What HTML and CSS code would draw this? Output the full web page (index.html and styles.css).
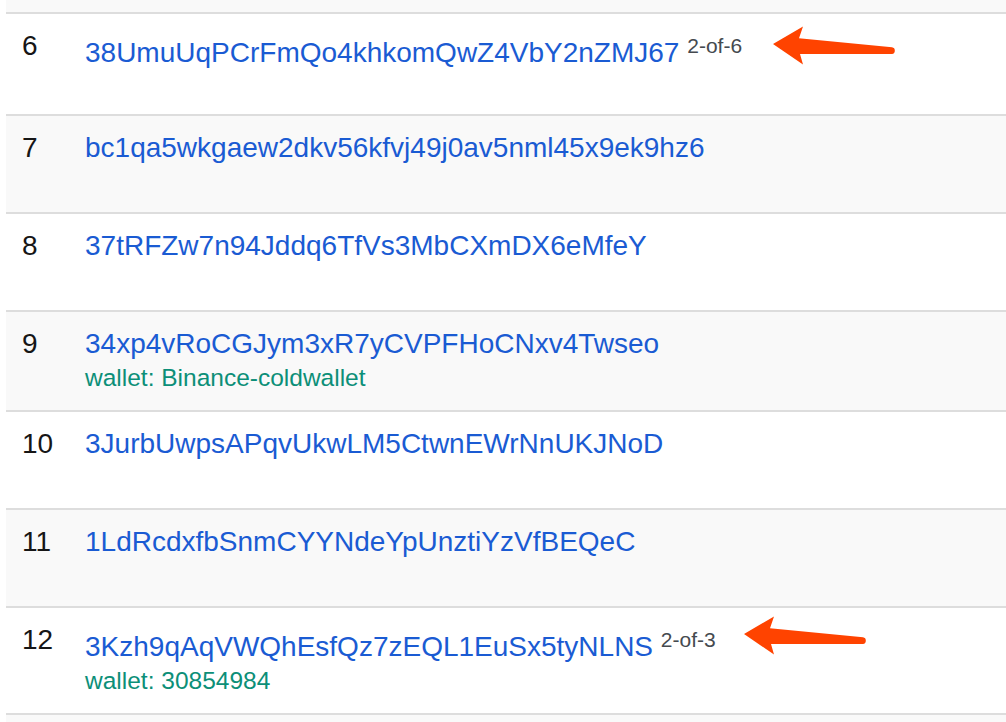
FILE: index.html
```html
<!DOCTYPE html>
<html lang="en">
<head>
<meta charset="utf-8">
<title>Addresses</title>
<link rel="stylesheet" href="styles.css">
</head>
<body>
<div class="table">
  <div class="row row-tail stripe"></div>

  <div class="row row-multisig">
    <div class="cell num">6</div>
    <div class="cell addr"><a class="link" href="#">38UmuUqPCrFmQo4khkomQwZ4VbY2nZMJ67</a> <sup class="sig">2-of-6</sup></div>
    <svg class="arrow arrow-a" viewBox="0 0 130 44" aria-hidden="true"><path d="M3,20 L33,2.5 L29,14.3 L122,23.3 A3.4,3.4 0 0 1 122,30 L30,30 L33,40.5 Z"/></svg>
  </div>

  <div class="row stripe">
    <div class="cell num">7</div>
    <div class="cell addr"><a class="link" href="#">bc1qa5wkgaew2dkv56kfvj49j0av5nml45x9ek9hz6</a></div>
  </div>

  <div class="row">
    <div class="cell num">8</div>
    <div class="cell addr"><a class="link" href="#">37tRFZw7n94Jddq6TfVs3MbCXmDX6eMfeY</a></div>
  </div>

  <div class="row stripe">
    <div class="cell num">9</div>
    <div class="cell addr"><a class="link" href="#">34xp4vRoCGJym3xR7yCVPFHoCNxv4Twseo</a>
      <div class="wallet">wallet: Binance-coldwallet</div></div>
  </div>

  <div class="row">
    <div class="cell num">10</div>
    <div class="cell addr"><a class="link" href="#">3JurbUwpsAPqvUkwLM5CtwnEWrNnUKJNoD</a></div>
  </div>

  <div class="row stripe">
    <div class="cell num">11</div>
    <div class="cell addr"><a class="link" href="#">1LdRcdxfbSnmCYYNdeYpUnztiYzVfBEQeC</a></div>
  </div>

  <div class="row">
    <div class="cell num">12</div>
    <div class="cell addr"><a class="link" href="#">3Kzh9qAqVWQhEsfQz7zEQL1EuSx5tyNLNS</a> <sup class="sig">2-of-3</sup>
      <div class="wallet">wallet: 30854984</div></div>
    <svg class="arrow arrow-b" viewBox="0 0 130 44" aria-hidden="true"><path d="M3,20 L33,2.5 L29,14.3 L122,23.3 A3.4,3.4 0 0 1 122,30 L30,30 L33,40.5 Z"/></svg>
  </div>

  <div class="row stripe"></div>
</div>
</body>
</html>
```

FILE: styles.css
```css
html, body {
  margin: 0;
  padding: 0;
  background: #ffffff;
  overflow: hidden;
}

body {
  font-family: "Liberation Sans", Arial, Helvetica, sans-serif;
  font-size: 28px;
  line-height: 40px;
  color: #1a1a1a;
}

.table {
  margin-left: 6px;
  width: 1100px;
}

.row {
  position: relative;
  display: grid;
  grid-template-columns: 63px 1fr;
  box-sizing: border-box;
  min-height: 98px;
  border-top: 2px solid #dddddd;
  background: #ffffff;
}

.row.stripe {
  background: #f9f9f9;
}

.row.row-tail {
  min-height: 12px;
  height: 12px;
  border-top: none;
}

.row.row-multisig {
  min-height: 102px;
}

.cell {
  padding: 12px 16px 19px 16px;
}

.num {
  color: #161616;
}

.addr {
  white-space: nowrap;
}

.link {
  color: #1a5bd3;
  text-decoration: none;
}

.sig {
  font-size: 21px;
  color: #454a4f;
  vertical-align: 9px;
}

.wallet {
  font-size: 24.5px;
  line-height: 27px;
  color: #0c8f78;
}

.arrow {
  position: absolute;
  width: 130px;
  height: 44px;
  fill: #ff4300;
}

.arrow-a {
  left: 764px;
  top: 10px;
}

.arrow-b {
  left: 735px;
  top: 6px;
}
```
